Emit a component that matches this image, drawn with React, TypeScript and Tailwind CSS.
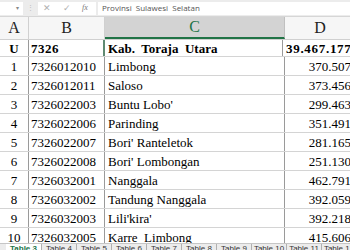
import React from "react";

const rows = [
  ["1", "7326012010", "Limbong", "370.507"],
  ["2", "7326012011", "Saloso", "373.456"],
  ["3", "7326022003", "Buntu Lobo'", "299.463"],
  ["4", "7326022006", "Parinding", "351.491"],
  ["5", "7326022007", "Bori' Ranteletok", "281.165"],
  ["6", "7326022008", "Bori' Lombongan", "251.130"],
  ["7", "7326032001", "Nanggala", "462.791"],
  ["8", "7326032002", "Tandung Nanggala", "392.059"],
  ["9", "7326032003", "Lili'kira'", "392.218"],
  ["10", "7326032005", "Karre  Limbong", "415.606"],
];

const tabs = ["Table 3", "Table 4", "Table 5", "Table 6", "Table 7", "Table 8", "Table 9", "Table 10", "Table 11", "Table 12"];

const serif = { fontFamily: '"Liberation Serif", "DejaVu Serif", serif' };

const FormulaBar = () => (
  <div className="flex items-center h-[17px] bg-[#ececec] border-b border-[#d6d6d6] shrink-0">
    <div className="w-[23px] h-[13px] bg-white flex items-center justify-end pr-[4px] text-[6px] text-[#888]">▾</div>
    <div className="w-[15px] flex justify-center text-[7px] text-[#bbb]">⋮</div>
    <div className="w-[58px] h-[13px] bg-white flex items-center text-[#b0b0b0] text-[9px]">
      <span className="ml-[5px]">✕</span>
      <span className="ml-[12px]">✓</span>
      <span className="ml-[11px] italic text-[#777] text-[8px]" style={serif}>fx</span>
    </div>
    <div className="flex-1 ml-[2px] h-[13px] bg-white flex items-center pl-[4px] text-[8px] text-[#555] whitespace-pre" style={{ fontFamily: '"Open Sans", "Liberation Sans", sans-serif' }}>
      Provinsi  Sulawesi  Selatan
    </div>
  </div>
);

const HeaderRow = () => (
  <div className="flex h-[23px] bg-[#f6f6f6] border-b border-[#d0d0d0] text-[16px] text-[#222]" style={serif}>
    <div className="w-[29px] shrink-0 flex items-center justify-center border-r border-[#d0d0d0]">A</div>
    <div className="w-[76px] shrink-0 flex items-center justify-center border-r border-[#d0d0d0]">B</div>
    <div className="w-[180px] shrink-0 flex items-center justify-center border-r border-[#c0c0c0] bg-[#d3d3d3] text-[#217346] border-b-2 border-b-[#217346]">C</div>
    <div className="w-[70px] shrink-0 flex items-center justify-center">D</div>
  </div>
);

const App = () => (
  <div className="w-[350px] h-[250px] overflow-hidden bg-white flex flex-col">
    <FormulaBar />
    <div className="h-[226px] overflow-hidden shrink-0 w-[355px]">
      <HeaderRow />
      <div className="flex h-[17px] border-b border-[#d4d4d4] text-[13px] font-bold text-black leading-none" style={serif}>
        <div className="w-[29px] shrink-0 flex items-center justify-center border-r border-[#9a9a9a]">U</div>
        <div className="w-[76px] shrink-0 flex items-center pl-[2px] border-r border-[#9a9a9a] tracking-[0.5px]">7326</div>
        <div className="w-[180px] shrink-0 flex items-center pl-[3px] border-r border-[#9a9a9a] border-l-2 border-l-[#5f8a72] -ml-[2px] whitespace-pre">Kab.  Toraja  Utara</div>
        <div className="w-[70px] shrink-0 flex items-center pl-[3px] whitespace-nowrap overflow-hidden tracking-[0.7px]">39.467.177.522</div>
      </div>
      {rows.map((r) => (
        <div key={r[0]} className="flex h-[19px] border-b border-[#d4d4d4] text-[13px] text-black leading-none" style={serif}>
          <div className="w-[29px] shrink-0 flex items-center justify-center border-r border-[#9a9a9a]">{r[0]}</div>
          <div className="w-[76px] shrink-0 flex items-center pl-[2px] border-r border-[#9a9a9a]">{r[1]}</div>
          <div className="w-[180px] shrink-0 flex items-center pl-[3px] border-r border-[#9a9a9a] whitespace-pre">{r[2]}</div>
          <div className="w-[70px] shrink-0 flex items-center justify-end pr-[4px]">{r[3]}</div>
        </div>
      ))}
    </div>
    <div className="flex-1 bg-[#ececec] border-t border-[#c6c6c6] flex overflow-hidden text-[8px] leading-[9px] text-[#333]" style={{ fontFamily: '"Liberation Sans", Arial, sans-serif' }}>
      <div className="w-[6px] shrink-0" />
      {tabs.map((t, i) => (
        <div
          key={t}
          className={
            i === 0
              ? "w-[35px] shrink-0 bg-white text-[#217346] font-bold text-center"
              : "w-[35px] shrink-0 text-center border-l border-[#b0b0b0]"
          }
        >
          {t}
        </div>
      ))}
    </div>
  </div>
);

export default App;
